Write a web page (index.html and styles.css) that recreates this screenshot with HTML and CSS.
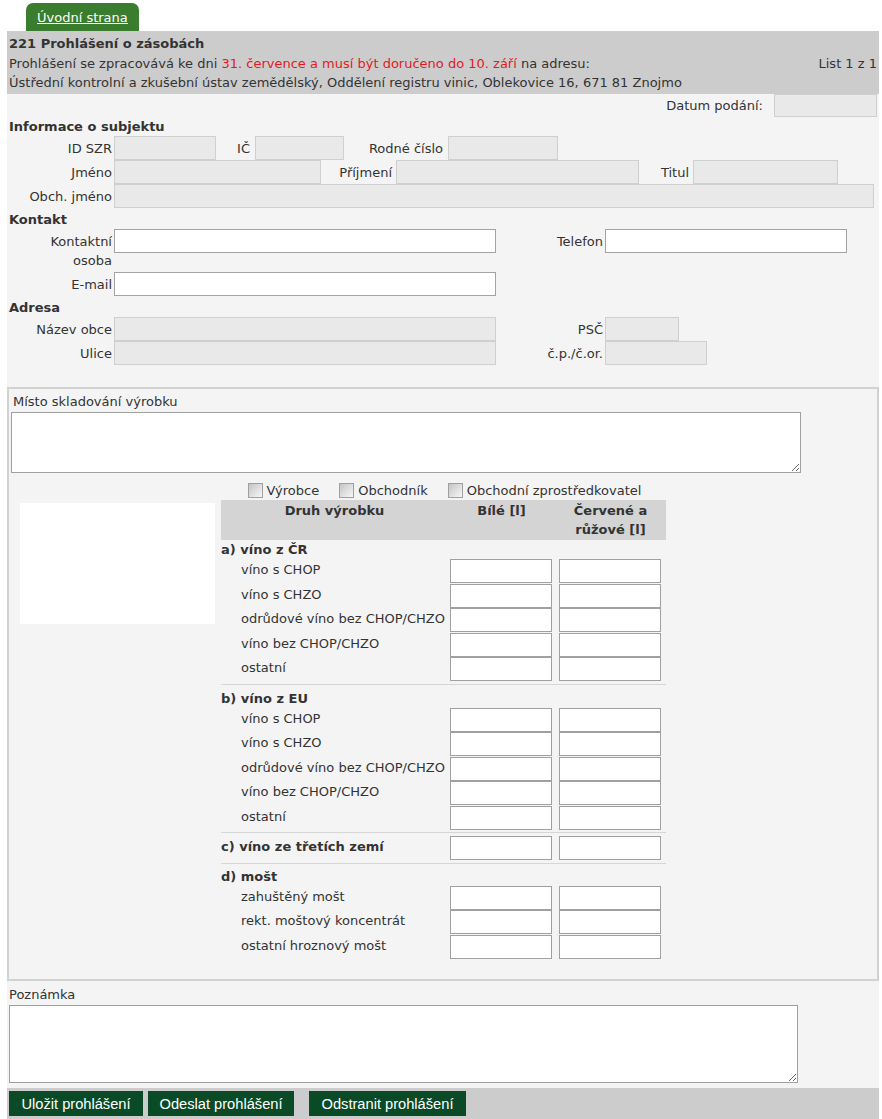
FILE: index.html
```html
<!DOCTYPE html>
<html lang="cs">
<head>
<meta charset="utf-8">
<title>221 Prohlášení o zásobách</title>
<link rel="stylesheet" href="styles.css">
</head>
<body>
<div class="page">
  <nav class="tabs"><a class="tab" href="#">Úvodní strana</a></nav>
  <header class="header">
    <div class="title">221 Prohlášení o zásobách</div>
    <div class="hline"><span>Prohlášení se zpracovává ke dni <span class="red">31. července a musí být doručeno do 10. září</span> na adresu:</span><span>List 1 z 1</span></div>
    <div>Ústřední kontrolní a zkušební ústav zemědělský, Oddělení registru vinic, Oblekovice 16, 671 81 Znojmo</div>
  </header>
  <main class="form">
    <div class="subject">
      <div class="date-row"><span class="date-label">Datum podání:</span><input class="in dis w-date" disabled></div>
      <div class="sec">Informace o subjektu</div>
      <div class="row"><span class="lbl l-main">ID SZR</span><input class="in dis w-idszr" disabled><span class="lbl l-ic">IČ</span><input class="in dis w-ic" disabled><span class="lbl l-rc">Rodné číslo</span><input class="in dis w-rc" disabled></div>
      <div class="row"><span class="lbl l-main">Jméno</span><input class="in dis w-jmeno" disabled><span class="lbl l-prijmeni">Příjmení</span><input class="in dis w-prijmeni" disabled><span class="lbl l-titul">Titul</span><input class="in dis w-titul" disabled></div>
      <div class="row"><span class="lbl l-main">Obch. jméno</span><input class="in dis w-obch" disabled></div>
      <div class="sec">Kontakt</div>
      <div class="row row-top"><span class="lbl l-main">Kontaktní<br>osoba</span><input class="in w-kontakt"><span class="lbl l-right">Telefon</span><input class="in w-tel"></div>
      <div class="row"><span class="lbl l-main">E-mail</span><input class="in w-kontakt"></div>
      <div class="sec">Adresa</div>
      <div class="row"><span class="lbl l-main">Název obce</span><input class="in dis w-kontakt" disabled><span class="lbl l-right">PSČ</span><input class="in dis w-psc" disabled></div>
      <div class="row"><span class="lbl l-main">Ulice</span><input class="in dis w-kontakt" disabled><span class="lbl l-right">č.p./č.or.</span><input class="in dis w-cp" disabled></div>
    </div>

    <section class="storage">
      <div class="field-label">Místo skladování výrobku</div>
      <textarea class="ta ta-storage"></textarea>
      <div class="wine">
        <div class="blank"></div>
        <div class="wine-col">
          <div class="roles">
            <label class="role"><input type="checkbox" class="cb">Výrobce</label>
            <label class="role"><input type="checkbox" class="cb">Obchodník</label>
            <label class="role"><input type="checkbox" class="cb">Obchodní zprostředkovatel</label>
          </div>
          <table class="wt">
            <colgroup><col class="c-lab"><col class="c-w"><col class="c-r"></colgroup>
            <thead>
              <tr><th>Druh výrobku</th><th>Bílé [l]</th><th>Červené a růžové [l]</th></tr>
            </thead>
            <tbody>
              <tr><td class="grp" colspan="3">a) víno z ČR</td></tr>
              <tr class="data"><td class="lab">víno s CHOP</td><td><input class="cin cin-w"></td><td><input class="cin cin-r"></td></tr>
              <tr class="data"><td class="lab">víno s CHZO</td><td><input class="cin cin-w"></td><td><input class="cin cin-r"></td></tr>
              <tr class="data"><td class="lab">odrůdové víno bez CHOP/CHZO</td><td><input class="cin cin-w"></td><td><input class="cin cin-r"></td></tr>
              <tr class="data"><td class="lab">víno bez CHOP/CHZO</td><td><input class="cin cin-w"></td><td><input class="cin cin-r"></td></tr>
              <tr class="data"><td class="lab">ostatní</td><td><input class="cin cin-w"></td><td><input class="cin cin-r"></td></tr>
              <tr><td colspan="3"><div class="sep sep-a"></div></td></tr>
              <tr><td class="grp" colspan="3">b) víno z EU</td></tr>
              <tr class="data"><td class="lab">víno s CHOP</td><td><input class="cin cin-w"></td><td><input class="cin cin-r"></td></tr>
              <tr class="data"><td class="lab">víno s CHZO</td><td><input class="cin cin-w"></td><td><input class="cin cin-r"></td></tr>
              <tr class="data"><td class="lab">odrůdové víno bez CHOP/CHZO</td><td><input class="cin cin-w"></td><td><input class="cin cin-r"></td></tr>
              <tr class="data"><td class="lab">víno bez CHOP/CHZO</td><td><input class="cin cin-w"></td><td><input class="cin cin-r"></td></tr>
              <tr class="data"><td class="lab">ostatní</td><td><input class="cin cin-w"></td><td><input class="cin cin-r"></td></tr>
              <tr><td colspan="3"><div class="sep"></div></td></tr>
              <tr class="data"><td class="grp">c) víno ze třetích zemí</td><td><input class="cin cin-w"></td><td><input class="cin cin-r"></td></tr>
              <tr><td colspan="3"><div class="sep"></div></td></tr>
              <tr><td class="grp" colspan="3">d) mošt</td></tr>
              <tr class="data"><td class="lab">zahuštěný mošt</td><td><input class="cin cin-w"></td><td><input class="cin cin-r"></td></tr>
              <tr class="data"><td class="lab">rekt. moštový koncentrát</td><td><input class="cin cin-w"></td><td><input class="cin cin-r"></td></tr>
              <tr class="data"><td class="lab">ostatní hroznový mošt</td><td><input class="cin cin-w"></td><td><input class="cin cin-r"></td></tr>
            </tbody>
          </table>
        </div>
      </div>
    </section>

    <div class="note">
      <div class="field-label">Poznámka</div>
      <textarea class="ta ta-note"></textarea>
    </div>

    <div class="actions">
      <button class="btn btn-save" type="button">Uložit prohlášení</button>
      <button class="btn btn-send" type="button">Odeslat prohlášení</button>
      <button class="btn btn-del" type="button">Odstranit prohlášení</button>
    </div>
  </main>
</div>
</body>
</html>
```

FILE: styles.css
```css
* { box-sizing: border-box; }

body {
  margin: 0;
  background: #fff;
  font-family: "DejaVu Sans", Verdana, sans-serif;
  font-size: 13px;
  color: #333;
}

.page {
  width: 872px;
  margin-left: 7px;
}

/* tabs */
.tabs {
  display: flex;
  height: 31px;
  padding: 3px 0 0 19px;
}
.tab {
  display: block;
  height: 28px;
  padding: 0 11px;
  background: #3a7d2e;
  color: #fff;
  border-radius: 7px 7px 0 0;
  line-height: 29px;
  text-decoration: underline;
}

/* header */
.header {
  background: #ccc;
  padding: 3px 2px 1.5px;
  line-height: 19.5px;
}
.title { font-weight: bold; }
.hline {
  display: flex;
  justify-content: space-between;
}
.red { color: #e4191e; }

/* form */
.form { background: #f4f4f4; }

.subject { padding: 0 2px; }

.date-row {
  display: flex;
  justify-content: flex-end;
  align-items: center;
  height: 23px;
}
.date-label { margin-right: 11px; }

.sec {
  font-weight: bold;
  line-height: 19px;
  margin-top: 2px;
}
.date-row + .sec { margin-top: 0; }

.row {
  display: flex;
  align-items: center;
  height: 24px;
}
.row-top {
  align-items: flex-start;
  height: 41px;
  margin-bottom: 2px;
}
.row-top .lbl { padding-top: 3px; }

.lbl {
  flex: none;
  text-align: right;
  padding-right: 2px;
  line-height: 19px;
}
.l-main { width: 105px; }
.l-ic { width: 39px; padding-right: 5px; }
.l-rc { width: 104px; padding-right: 5px; }
.l-prijmeni { width: 75px; padding-right: 4px; }
.l-titul { width: 54px; padding-right: 4px; }
.l-right { width: 109px; }

.in {
  flex: none;
  height: 24px;
  margin: 0;
  padding: 0 3px;
  border: 1px solid #a3a3a3;
  background: #fff;
  font: inherit;
}
.in.dis {
  background: #e9e9e9;
  border-color: #cfcfcf;
}
.date-row .in { height: 23px; }

.w-date { width: 103px; }
.w-idszr { width: 102px; }
.w-ic { width: 89px; }
.w-rc { width: 110px; }
.w-jmeno { width: 207px; }
.w-prijmeni { width: 243px; }
.w-titul { width: 145px; }
.w-obch { width: 760px; }
.w-kontakt { width: 382px; }
.w-tel { width: 242px; }
.w-psc { width: 74px; }
.w-cp { width: 102px; }

/* storage fieldset */
.storage {
  margin-top: 22px;
  border: 2px solid #d2d2d2;
  padding: 3px 2px 20px;
}
.field-label {
  line-height: 19px;
  padding-left: 2px;
}
.ta {
  display: block;
  margin: 1px 0 0 2px;
  border: 1px solid #a0a0a0;
  background: #fff;
  font: inherit;
}
.ta-storage { width: 790px; height: 61px; margin-left: 0; }

.wine {
  display: flex;
  align-items: flex-start;
  margin-top: 7px;
}
.blank {
  flex: none;
  width: 195px;
  height: 121px;
  margin: 23px 0 0 9px;
  background: #fff;
}
.wine-col {
  flex: none;
  width: 445px;
  margin-left: 6px;
}

.roles {
  display: flex;
  justify-content: center;
  gap: 20px;
  height: 20px;
  line-height: 19px;
  padding-left: 2px;
}
.role {
  display: flex;
  align-items: center;
}
.cb {
  appearance: none;
  -webkit-appearance: none;
  width: 15px;
  height: 15px;
  margin: 0 4px 0 0;
  border: 1px solid #a0a0a0;
  border-radius: 0;
  background: linear-gradient(135deg, #c4c4c4, #f7f7f7);
}

.wt {
  width: 445px;
  table-layout: fixed;
  border-collapse: collapse;
  border-spacing: 0;
}
.c-lab { width: 227px; }
.c-w { width: 107px; }
.c-r { width: 111px; }

.wt th {
  background: #d4d4d4;
  font-weight: bold;
  vertical-align: top;
  line-height: 19px;
  padding: 1px 0 1px;
  height: 40px;
  text-align: center;
}
.wt th:last-child { padding: 1px 6px; }
.wt td { padding: 0; }
.wt .grp {
  font-weight: bold;
  line-height: 19px;
}
.wt .data td {
  height: 24.5px;
  vertical-align: middle;
}
.wt .data .lab,
.wt .data .grp {
  vertical-align: top;
  padding-top: 1px;
}
.wt .lab { padding-left: 20px; line-height: 19px; }

.cin {
  display: block;
  width: 102px;
  height: 24px;
  margin: 0;
  border: 1px solid #a0a0a0;
  background: #fff;
  font: inherit;
}
.cin-w { margin-left: 2px; }
.cin-r { margin-left: 4px; }

.sep {
  height: 1px;
  background: #d6d6d6;
  margin: 2px 0 3px;
}
.sep.sep-a { margin-bottom: 4px; }

/* note */
.note {
  padding: 4px 0 0;
}
.ta-note {
  width: 789px;
  height: 78px;
  margin: 1px 0 0 2px;
}

/* actions */
.actions {
  display: flex;
  margin-top: 5px;
  padding: 3px 2px;
  background: #ccc;
}
.btn {
  height: 25px;
  padding: 0;
  border: none;
  background: #0a4a27;
  color: #fff;
  font-family: "Liberation Sans", Arial, sans-serif;
  font-size: 11pt;
  cursor: pointer;
}
.btn-save { width: 134px; }
.btn-send { width: 146px; margin-left: 5px; }
.btn-del { width: 157px; margin-left: 15px; }
```
